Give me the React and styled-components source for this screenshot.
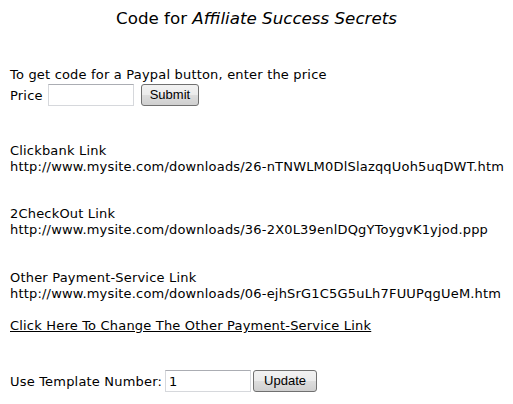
import React, { useState } from 'react'
import styled, { createGlobalStyle } from 'styled-components'

const GlobalStyle = createGlobalStyle`
    body {
        margin: 0;
        padding: 8px;
        background: #ffffff;
        color: #000000;
        font-family: "DejaVu Sans", Verdana, sans-serif;
        font-size: 13px;
    }
`

const Page = styled.div`
    display: flex;
    flex-direction: column;
    width: 497px;
`
const Title = styled.h1`
    margin: 0;
    font-size: 16.7px;
    font-weight: 400;
    line-height: 20px;
    text-align: center;
`
const Line = styled.div`
    line-height: 16px;
    letter-spacing: 0.19px;
    margin-top: ${p => p.$gap || 0}px;
    padding-left: 2px;
    white-space: nowrap;
`
const Row = styled.div`
    display: flex;
    align-items: center;
    gap: ${p => p.$gap || 6}px;
    margin-top: ${p => p.$top || 0}px;
    padding-left: 2px;
    height: 22px;
`
const Label = styled.span`
    line-height: 16px;
    letter-spacing: 0.19px;
    margin-top: 2px;
`
const Field = styled.input`
    box-sizing: border-box;
    width: ${p => p.$w}px;
    height: 22px;
    margin: 0;
    padding: 1px 3px;
    border: 1px solid #d6d8dc;
    border-top-color: #abadb3;
    background: #ffffff;
    font-family: "DejaVu Sans", Verdana, sans-serif;
    font-size: 13px;
    color: #000;
    outline: none;
`
const Button = styled.button`
    box-sizing: border-box;
    height: 22px;
    padding: 0 ${p => p.$pad || 8}px;
    margin: 0 0 0 ${p => p.$left || 0}px;
    border: 1px solid #707070;
    border-radius: 3px;
    background: linear-gradient(#f2f2f2 0%, #ebebeb 50%, #dddddd 51%, #cfcfcf 100%);
    font-family: "Liberation Sans", Arial, sans-serif;
    font-size: 13px;
    color: #000;
    line-height: 18px;
`
const Link = styled.a`
    color: #000;
    text-decoration: underline;
`

export default function App() {
    const [price, setPrice] = useState('')
    const [template, setTemplate] = useState('1')

    return (
        <Page>
            <GlobalStyle />
            <Title>Code for <i>Affiliate Success Secrets</i></Title>

            <Line $gap={39}>To get code for a Paypal button, enter the price</Line>
            <Row $top={1} $gap={5}>
                <Label>Price</Label>
                <Field $w={86} value={price} onChange={e => setPrice(e.target.value)} />
                <Button $left={2}>Submit</Button>
            </Row>

            <Line $gap={37}>Clickbank Link</Line>
            <Line>http://www.mysite.com/downloads/26-nTNWLM0DlSlazqqUoh5uqDWT.htm</Line>

            <Line $gap={31}>2CheckOut Link</Line>
            <Line>http://www.mysite.com/downloads/36-2X0L39enlDQgYToygvK1yjod.ppp</Line>

            <Line $gap={32}>Other Payment-Service Link</Line>
            <Line>http://www.mysite.com/downloads/06-ejhSrG1C5G5uLh7FUUPqgUeM.htm</Line>

            <Line $gap={16}><Link href="#">Click Here To Change The Other Payment-Service Link</Link></Line>

            <Row $top={36} $gap={3}>
                <Label>Use Template Number:</Label>
                <Field $w={86} value={template} onChange={e => setTemplate(e.target.value)} />
                <Button $left={-1} $pad={10}>Update</Button>
            </Row>
        </Page>
    )
}
